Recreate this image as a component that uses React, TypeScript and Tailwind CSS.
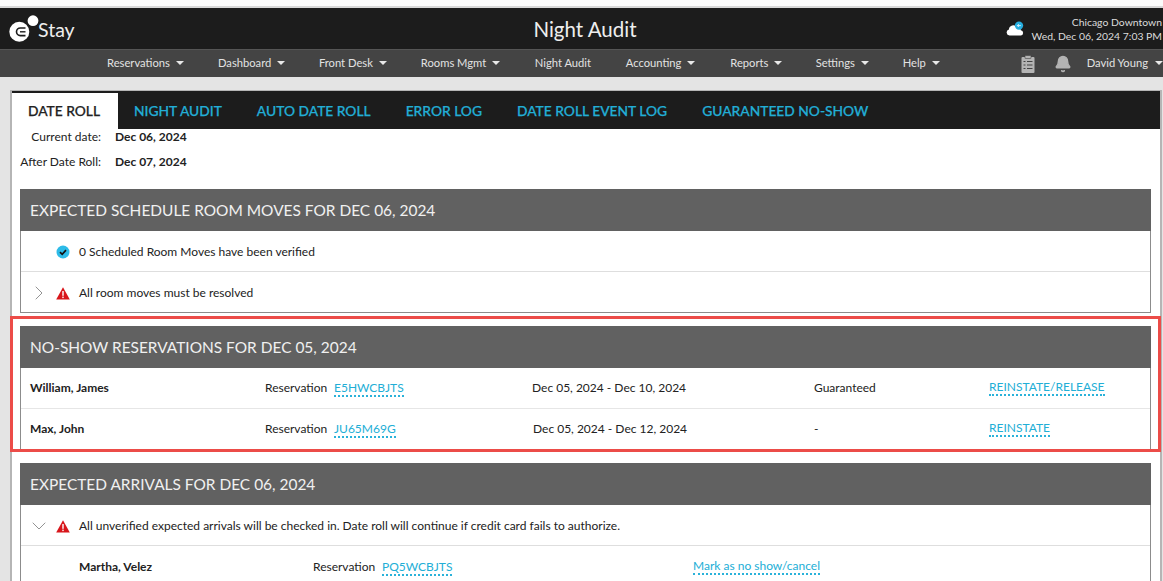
import { Bell, ChevronDown, ChevronRight } from 'lucide-react';

const navItems = [
  { label: 'Reservations', caret: true, width: 'w-[111px]' },
  { label: 'Dashboard', caret: true, width: 'w-[101px]' },
  { label: 'Front Desk', caret: true, width: 'w-[102px]' },
  { label: 'Rooms Mgmt', caret: true, width: 'w-[114px]' },
  { label: 'Night Audit', caret: false, width: 'w-[91px]' },
  { label: 'Accounting', caret: true, width: 'w-[104.5px]' },
  { label: 'Reports', caret: true, width: 'w-[85.5px]' },
  { label: 'Settings', caret: true, width: 'w-[87px]' },
  { label: 'Help', caret: true, width: 'w-[60px]' },
];

const tabs = ['NIGHT AUDIT', 'AUTO DATE ROLL', 'ERROR LOG', 'DATE ROLL EVENT LOG', 'GUARANTEED NO-SHOW'];

function Caret() {
  return <span className="ml-[6px] inline-block h-0 w-0 border-x-[4px] border-t-[4px] border-x-transparent border-t-[#e8e8e8]" />;
}

function Logo() {
  return (
    <svg width="30" height="30" viewBox="0 0 30 30" className="-mr-[1px]">
      <circle cx="10.3" cy="17.8" r="10" fill="#fff" />
      <circle cx="24" cy="6.7" r="6.2" fill="#1c1c1c" />
      <circle cx="24" cy="6.7" r="5.4" fill="#fff" />
      <path d="M16.5 14h-5.2a3.8 3.8 0 0 0 0 7.6h5.2" fill="none" stroke="#1c1c1c" strokeWidth="1.6" />
      <path d="M11 17.8h5.5" stroke="#1c1c1c" strokeWidth="1.4" />
    </svg>
  );
}

function CloudIcon() {
  return (
    <svg width="18" height="16" viewBox="0 0 18 16">
      <path d="M3.5 14.5a3 3 0 0 1-.6-5.9A4.5 4.5 0 0 1 11 6a3.2 3.2 0 0 1 3.8 3.2 2.7 2.7 0 0 1 .2 5.3z" fill="#fff" />
      <circle cx="13" cy="4.6" r="4.2" fill="#27aee0" />
      <path d="M14.8 4.6h-3.3M12.8 3.2l-1.4 1.4 1.4 1.4" stroke="#fff" strokeWidth="0.8" fill="none" />
    </svg>
  );
}

function ClipboardIcon() {
  return (
    <svg width="14" height="18" viewBox="0 0 14 18">
      <rect x="0.5" y="2" width="13" height="16" rx="1" fill="#b4b4b4" />
      <rect x="4" y="0.5" width="6" height="3" rx="0.5" fill="#b4b4b4" stroke="#444" strokeWidth="0.6" />
      <path d="M2.5 6.5h2M2.5 10h2M2.5 13.5h2M6 6.5h5.5M6 10h5.5M6 13.5h5.5" stroke="#444" strokeWidth="1" />
    </svg>
  );
}

function CheckBadge() {
  return (
    <svg width="14" height="14" viewBox="0 0 14 14">
      <circle cx="7" cy="7" r="6.5" fill="#2dbbe8" />
      <path d="M4 7.2l2.2 2.1L10 5.2" stroke="#111" strokeWidth="1.7" fill="none" />
    </svg>
  );
}

function WarnIcon() {
  return (
    <svg width="14" height="13" viewBox="0 0 14 13">
      <path d="M7 0.3L13.8 12.6H0.2z" fill="#d8161b" />
      <rect x="6.3" y="4" width="1.4" height="4.8" fill="#fff" />
      <rect x="6.3" y="9.6" width="1.4" height="1.5" fill="#fff" />
    </svg>
  );
}

function DotLink({ children }: { children: string }) {
  return (
    <a className="border-b-2 border-dotted border-[#2ab2da] leading-[14px] text-[#22aed6]">{children}</a>
  );
}

function SectionHeader({ title }: { title: string }) {
  return (
    <div className="flex h-[42px] items-center bg-[#616161] pl-[10px] pt-[1px] text-[15.45px] text-[#f0f0f0]">{title}</div>
  );
}

function MessageRow({ icon, text, chevron, last }: { icon: React.ReactNode; text: string; chevron?: React.ReactNode; last?: boolean }) {
  return (
    <div className={`flex items-center pt-[2px] ${last ? 'h-[40px]' : 'h-[41px] border-b border-[#dedede]'}`}>
      <div className="flex w-[35px] justify-center">{chevron}</div>
      <div className="flex w-[23px] justify-start">{icon}</div>
      <span>{text}</span>
    </div>
  );
}

function NoShowRow({ name, code, dates, datesOffset, status, action, last }: { name: string; code: string; dates: string; datesOffset: string; status: string; action: string; last?: boolean }) {
  return (
    <div className={`flex items-center ${last ? 'h-[40px]' : 'h-[41px] border-b border-[#e6e6e6]'}`}>
      <span className="w-[244px] pl-[9px] font-bold">{name}</span>
      <span className="w-[69px]">Reservation</span>
      <span className="w-[198px]"><DotLink>{code}</DotLink></span>
      <span className={`w-[282px] ${datesOffset}`}>{dates}</span>
      <span className="w-[175px]">{status}</span>
      <DotLink>{action}</DotLink>
    </div>
  );
}

export default function App() {
  return (
    <div className="h-[581px] w-[1163px] overflow-hidden bg-[#e4e4e4] font-['Lato',sans-serif] text-[12px] text-[#222]">
      <div className="h-[6px] bg-[#fbfbfb]" />
      <div className="h-[2px] bg-[#d8d8d8]" />

      <header className="relative flex h-[41px] items-center justify-between bg-[#1c1c1c] pr-[1px] text-white">
        <div className="flex items-center pl-[9px]">
          <Logo />
          <span className="mt-[3px] text-[19.5px] leading-none text-[#eee]">Stay</span>
        </div>
        <div className="absolute inset-x-0 mt-[1px] pl-[7px] text-center text-[20.5px] text-[#eee]">Night Audit</div>
        <div className="flex items-center gap-[8px] text-[10.4px] leading-[14px] text-[#ddd]">
          <CloudIcon />
          <div className="text-right">
            <div>Chicago Downtown</div>
            <div>Wed, Dec 06, 2024 7:03 PM</div>
          </div>
        </div>
      </header>

      <nav className="flex h-[28px] items-center border-t border-[#555] bg-[#444444] pl-[107px] text-[11.2px] text-[#e2e2e2]">
        {navItems.map((item) => (
          <div key={item.label} className={`flex items-center ${item.width}`}>
            {item.label}
            {item.caret && <Caret />}
          </div>
        ))}
        <div className="ml-[58px] flex w-[33px]"><ClipboardIcon /></div>
        <Bell className="h-[18px] w-[18px] text-[#b4b4b4]" fill="#b4b4b4" />
        <div className="ml-[15px] flex items-center whitespace-nowrap">
          David Young
          <span className="ml-[7px] inline-block h-0 w-0 border-x-[4px] border-t-[4px] border-x-transparent border-t-[#e8e8e8]" />
        </div>
      </nav>

      <main className="ml-[10px] mt-[13px] h-[600px] w-[1152px] border-l-2 border-r-2 border-t border-[#b5b5b5] bg-white">
        <div className="flex h-[38px] bg-[#1c1c1c] pt-[2px] text-[13.8px] font-medium [-webkit-text-stroke:0.25px]">
          <div className="flex w-[106px] items-center justify-center bg-white pr-[2px] text-[#222]">DATE ROLL</div>
          <div className="flex items-center gap-[35px] pl-[16px] text-[#22aed6]">
            {tabs.map((tab) => (
              <span key={tab}>{tab}</span>
            ))}
          </div>
        </div>

        <div className="flex items-center leading-[15px]">
          <span className="w-[89px] text-right">Current date:</span>
          <span className="ml-[14px] font-bold">Dec 06, 2024</span>
        </div>
        <div className="mt-[10px] flex items-center leading-[15px]">
          <span className="w-[89px] text-right">After Date Roll:</span>
          <span className="ml-[14px] font-bold">Dec 07, 2024</span>
        </div>

        <section className="ml-[8px] mt-[20px] w-[1131px]">
          <SectionHeader title="EXPECTED SCHEDULE ROOM MOVES FOR DEC 06, 2024" />
          <div className="border-x border-b border-[#8c8c8c]">
            <MessageRow icon={<CheckBadge />} text="0 Scheduled Room Moves have been verified" />
            <MessageRow
              icon={<WarnIcon />}
              text="All room moves must be resolved"
              chevron={<ChevronRight className="h-[24px] w-[24px] text-[#777]" strokeWidth={0.8} />}
              last
            />
          </div>
        </section>

        <section className="relative ml-[8px] mt-[13px] w-[1131px]">
          <div className="pointer-events-none absolute -bottom-[2px] -left-[10px] -right-[10px] -top-[10px] border-[3px] border-[#ec4c48]" />
          <SectionHeader title="NO-SHOW RESERVATIONS FOR DEC 05, 2024" />
          <div className="border-x border-b border-[#c4c4c4] border-l-[#8c8c8c] border-r-[#8c8c8c]">
            <NoShowRow
              name="William, James"
              code="E5HWCBJTS"
              dates="Dec 05, 2024 - Dec 10, 2024"
              datesOffset=""
              status="Guaranteed"
              action="REINSTATE/RELEASE"
            />
            <NoShowRow
              name="Max, John"
              code="JU65M69G"
              dates="Dec 05, 2024 - Dec 12, 2024"
              datesOffset="pl-[1px]"
              status="-"
              action="REINSTATE"
              last
            />
          </div>
        </section>

        <section className="ml-[8px] mt-[13px] w-[1131px]">
          <SectionHeader title="EXPECTED ARRIVALS FOR DEC 06, 2024" />
          <div className="border-x border-[#8c8c8c]">
            <MessageRow
              icon={<WarnIcon />}
              text="All unverified expected arrivals will be checked in. Date roll will continue if credit card fails to authorize."
              chevron={<ChevronDown className="h-[24px] w-[24px] text-[#777]" strokeWidth={0.8} />}
            />
            <div className="flex h-[41px] items-center">
              <span className="w-[292px] pl-[58px] font-bold">Martha, Velez</span>
              <span className="w-[69px]">Reservation</span>
              <span className="w-[311px]"><DotLink>PQ5WCBJTS</DotLink></span>
              <DotLink>Mark as no show/cancel</DotLink>
            </div>
          </div>
        </section>
      </main>
    </div>
  );
}
